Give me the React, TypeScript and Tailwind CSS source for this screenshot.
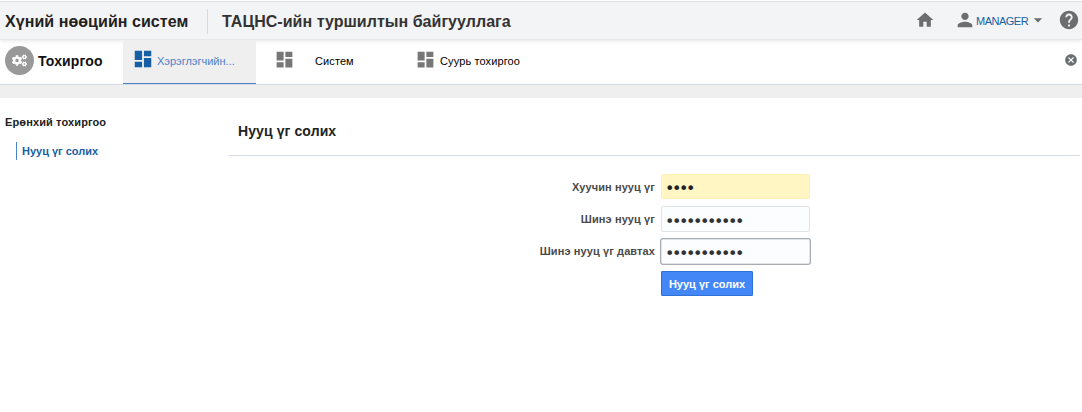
import React from 'react';
import { MdDashboard, MdHome, MdPerson, MdArrowDropDown, MdHelp, MdCancel } from 'react-icons/md';
import { FaCogs } from 'react-icons/fa';

function Field({ label, value, className }: { label: string; value: string; className: string }) {
  return (
    <label className="flex h-8 items-center">
      <span className="w-[426px] text-right text-[11px] font-bold text-[#4a4a4a] tracking-[0.1px]">{label}</span>
      <input
        type="password"
        defaultValue={value}
        className={`ml-[6px] w-[149px] rounded-[2px] border pl-[3px] font-['DejaVu_Sans'] text-[16px] tracking-[-2.45px] outline-none ${className}`}
      />
    </label>
  );
}

export default function App() {
  return (
    <div className="h-[412px] w-full overflow-hidden bg-white font-['Liberation_Sans',sans-serif] text-[#222]">
      <header className="flex h-10 items-center border-t border-b border-t-white border-b-[#e6e7e8] bg-[#f3f4f5] shadow-[0_1px_4px_rgba(0,0,0,0.1),inset_0_1px_0_#dfe0e1]">
        <h1 className="w-[207px] whitespace-nowrap pl-[5px] pt-[3px] text-[16px] font-bold leading-5 tracking-[0.06px]">Хүний нөөцийн систем</h1>
        <div className="mt-[2px] h-[25px] w-px bg-[#d3dae2]" />
        <h2 className="ml-[14px] whitespace-nowrap pt-[3px] text-[16px] font-bold leading-5 tracking-[0.04px] text-[#333]">ТАЦНС-ийн туршилтын байгууллага</h2>
        <div className="ml-auto flex items-center pr-[2px] text-[#6b6e6f]">
          <MdHome className="mr-[19px] size-5" />
          <MdPerson className="size-[22px]" />
          <span className="mt-[2px] w-[52px] whitespace-nowrap text-[11px] tracking-[-0.5px] text-[#165fa5]">MANAGER</span>
          <MdArrowDropDown className="size-5" />
          <MdHelp className="ml-[10px] size-[22px]" />
        </div>
      </header>
      <nav className="flex h-[45px] border-b border-[#d5dce4] text-[11px] text-black">
        <div className="flex w-[123px] items-center pb-1 pl-[5px]">
          <span className="flex size-[29px] items-center justify-center rounded-full bg-[#999] text-white">
            <FaCogs className="size-[15px]" />
          </span>
          <span className="ml-1 mt-[3px] whitespace-nowrap text-[14px] font-bold tracking-[0.15px] text-[#111]">Тохиргоо</span>
        </div>
        <div className="flex w-[133px] items-center border-b border-[#4a82c4] bg-[#efefef] pb-[5px] pl-[9px] text-[#4f7fc8]">
          <MdDashboard className="size-[22px] text-[#165fa5]" />
          <span className="ml-[3px] mt-[4px] whitespace-nowrap">Хэрэглэгчийн...</span>
        </div>
        <div className="flex w-[142px] items-center pb-[6px] pl-[18px]">
          <MdDashboard className="size-[21px] text-[#777]" />
          <span className="ml-5 mt-[4px] whitespace-nowrap tracking-[0.1px]">Систем</span>
        </div>
        <div className="flex items-center pb-[6px] pl-[17px]">
          <MdDashboard className="size-[21px] text-[#777]" />
          <span className="ml-[4px] mt-[4px] whitespace-nowrap tracking-[0.12px]">Суурь тохиргоо</span>
        </div>
        <div className="ml-auto flex items-center pb-1 pr-1 text-[#6b6e70]">
          <MdCancel className="size-[14px]" />
        </div>
      </nav>
      <div className="h-[13px] bg-[#efefef]" />
      <main className="flex">
        <aside className="w-[229px] pl-[5px] pt-[17px] text-[11px] font-bold">
          <div className="leading-[15px] tracking-[0.12px]">Ерөнхий тохиргоо</div>
          <div className="ml-[11px] mt-3 border-l border-[#4a82c4] pl-[5px] leading-[18px] text-[#165fa5]">Нууц үг солих</div>
        </aside>
        <section className="w-[851px]">
          <h3 className="h-[58px] border-b border-[#d5dce4] pl-[9px] pt-6 text-[14px] font-bold leading-[18px] tracking-[0.1px]">Нууц үг солих</h3>
          <form className="pt-[15px]">
            <Field label="Хуучин нууц үг" value="1234" className="mb-[2px] h-[25px] pt-[4px] border-[#fbefb4] bg-[#fff6c4] text-[#222]" />
            <Field label="Шинэ нууц үг" value="12345678901" className="h-[26px] pt-[4px] border-[#dfe4e7] bg-[#fcfdff] text-[#333]" />
            <Field label="Шинэ нууц үг давтах" value="12345678901" className="h-[25px] pt-[4px] border-[#dfe4e7] bg-[#fcfdff] text-[#333] shadow-[0_0_0_1px_#a9acb2]" />
            <button type="button" className="ml-[432px] mt-[4px] h-[25px] w-[92px] whitespace-nowrap rounded-[1px] border border-[#3070d8] bg-[#4387f6] pt-px text-[11px] font-bold text-white">
              Нууц үг солих
            </button>
          </form>
        </section>
      </main>
    </div>
  );
}
